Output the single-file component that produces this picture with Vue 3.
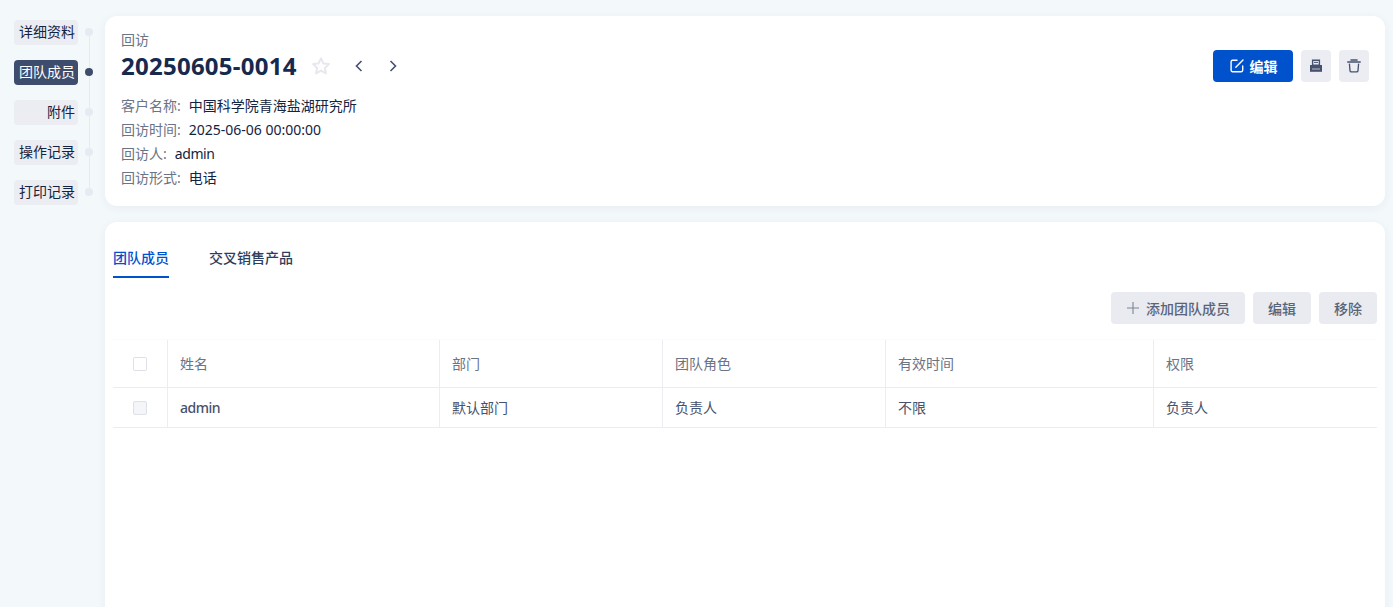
<script setup>
const navItems = [
  { label: '详细资料' },
  { label: '团队成员', active: true },
  { label: '附件' },
  { label: '操作记录' },
  { label: '打印记录' }
]
const infos = [
  { k: '客户名称:', v: '中国科学院青海盐湖研究所' },
  { k: '回访时间:', v: '2025-06-06 00:00:00' },
  { k: '回访人:', v: 'admin', tight: true },
  { k: '回访形式:', v: '电话' }
]
const headers = ['姓名', '部门', '团队角色', '有效时间', '权限']
const row = ['admin', '默认部门', '负责人', '不限', '负责人']
</script>

<template>
  <div class="page">
    <nav class="nav">
      <div class="line"></div>
      <div v-for="n in navItems" :key="n.label" class="nav-item" :class="{ active: n.active }">
        <span class="nav-label">{{ n.label }}</span>
        <i class="dot"></i>
      </div>
    </nav>
    <main class="main">
      <section class="card head">
        <div class="head-left">
          <div class="kind">回访</div>
          <div class="title-row">
            <h1 class="title">20250605-0014</h1>
            <svg class="star" viewBox="0 0 20 20" width="20" height="20"><path d="M10 2.4l2.4 5 5.5.7-4 3.8 1 5.4-4.9-2.7-4.9 2.7 1-5.4-4-3.8 5.5-.7z" fill="none" stroke="#e6e8ee" stroke-width="2" stroke-linejoin="round"/></svg>
            <svg class="chev" viewBox="0 0 12 14" width="12" height="14"><path d="M8.5 2L3.5 7l5 5" fill="none" stroke="#45516e" stroke-width="1.6"/></svg>
            <svg class="chev" viewBox="0 0 12 14" width="12" height="14"><path d="M3.5 2l5 5-5 5" fill="none" stroke="#45516e" stroke-width="1.6"/></svg>
          </div>
          <div class="info">
            <div v-for="i in infos" :key="i.k" class="info-row">
              <span class="k">{{ i.k }}</span><span class="v" :class="{ tight: i.tight }">{{ i.v }}</span>
            </div>
          </div>
        </div>
        <div class="actions">
          <button class="btn primary">
            <svg viewBox="0 0 16 16" width="16" height="16"><path d="M8 2.2H3.6A1.5 1.5 0 0 0 2.1 3.7v8.6a1.5 1.5 0 0 0 1.5 1.5h8.6a1.5 1.5 0 0 0 1.5-1.5V8M6.8 9.3l7.2-7.2" fill="none" stroke="#fff" stroke-width="1.4" stroke-linecap="round"/></svg>
            <span>编辑</span>
          </button>
          <button class="btn icon">
            <svg viewBox="0 0 14 14" width="14" height="14"><path d="M3.6 1.2h6.8v5H3.6z" fill="none" stroke="#45516e" stroke-width="1.4"/><path d="M5 3.4h4" stroke="#45516e" stroke-width="1"/><path d="M1 6h12v6.8H1z" fill="#45516e"/><path d="M3 10h8" stroke="#ebedf2" stroke-width=".7"/></svg>
          </button>
          <button class="btn icon">
            <svg viewBox="0 0 14 14" width="14" height="14"><path d="M.8 3h12.4M4 1h6" fill="none" stroke="#45516e" stroke-width="1.5" stroke-linecap="round"/><path d="M2.4 4.6l.6 7a1.4 1.4 0 0 0 1.4 1.3h5.2a1.4 1.4 0 0 0 1.4-1.3l.6-7" fill="none" stroke="#45516e" stroke-width="1.3"/></svg>
          </button>
        </div>
      </section>

      <section class="card body">
        <div class="tabs">
          <div class="tab active">团队成员</div>
          <div class="tab">交叉销售产品</div>
        </div>
        <div class="toolbar">
          <button class="btn grey add">
            <svg viewBox="0 0 12 12" width="12" height="12"><path d="M6 0v12M0 6h12" stroke="#7d8595" stroke-width="1.1"/></svg>
            <span>添加团队成员</span>
          </button>
          <button class="btn grey">编辑</button>
          <button class="btn grey">移除</button>
        </div>
        <div class="table">
          <div class="tr th">
            <div class="td c0"><i class="check"></i></div>
            <div v-for="(h, i) in headers" :key="h" class="td" :class="'c' + (i + 1)">{{ h }}</div>
          </div>
          <div class="tr rowb">
            <div class="td c0"><i class="check dis"></i></div>
            <div v-for="(c, i) in row" :key="i" class="td" :class="'c' + (i + 1)">{{ c }}</div>
          </div>
        </div>
      </section>
    </main>
  </div>
</template>

<style>
html, body { margin: 0; background: #f3f8fb; overflow: hidden; }
</style>

<style scoped>
.page {
  display: flex;
  height: 607px;
  overflow: hidden;
  background: #f3f8fb;
  font-family: "Noto Sans", "Noto Sans CJK SC", sans-serif;
  font-size: 14px;
  color: #1a2b4b;
}
.nav {
  position: relative;
  width: 105px;
  flex: none;
  padding: 20px 0 0 14px;
  box-sizing: border-box;
}
.line {
  position: absolute;
  left: 89px;
  top: 32px;
  width: 1px;
  height: 160px;
  background: #e6eaf1;
}
.nav-item {
  display: flex;
  align-items: center;
  height: 25px;
  margin-bottom: 15px;
}
.nav-label {
  width: 64px;
  height: 25px;
  line-height: 23px;
  box-sizing: border-box;
  padding-right: 3px;
  text-align: right;
  background: #ebedf2;
  border-radius: 4px;
  color: #14233f;
  white-space: nowrap;
}
.active .nav-label { background: #3e4d6d; color: #fff; }
.dot {
  width: 8px;
  height: 8px;
  margin-left: 7px;
  margin-bottom: 1px;
  border-radius: 50%;
  background: #e6eaf2;
  position: relative;
}
.active .dot { background: #3e4d6d; }
.main {
  flex: none;
  width: 1280px;
  height: 680px;
  padding-top: 16px;
  display: flex;
  flex-direction: column;
  gap: 16px;
}
.card {
  background: #fff;
  border-radius: 12px;
  box-shadow: 0 2px 10px rgba(30, 50, 90, 0.06);
}
.head {
  height: 190px;
  flex: none;
  padding: 14px 16px 0;
  box-sizing: border-box;
  display: flex;
  justify-content: space-between;
  align-items: flex-start;
}
.kind { color: #6b7386; font-size: 14px; line-height: 19px; }
.title-row { display: flex; align-items: center; height: 32px; margin-top: 1px; }
.title {
  margin: 0;
  font-size: 24px;
  line-height: 32px;
  font-weight: 700;
  letter-spacing: 0.25px;
  color: #172a4d;
}
.star { margin-left: 14px; }
.chev { margin-left: 22px; }
.info { margin-top: 12px; }
.info-row { height: 24px; line-height: 24px; font-size: 14px; white-space: nowrap; }
.k { color: #6b7386; margin-right: 8px; }
.v { color: #14233f; }
.tight { letter-spacing: -0.4px; }
.actions { display: flex; gap: 8px; margin-top: 20px; }
.btn {
  border: 0;
  border-radius: 4px;
  font-family: inherit;
  font-size: 14px;
  height: 32px;
  display: inline-flex;
  align-items: center;
  justify-content: center;
  padding: 0;
}
.primary {
  width: 80px;
  background: #0052cc;
  color: #fff;
  font-weight: 700;
  gap: 5px;
  padding-bottom: 1px;
}
.icon { width: 30px; background: #ebedf2; }
.body {
  flex: 1;
  padding: 0 8px;
  min-height: 0;
}
.tabs { display: flex; gap: 40px; padding-top: 24px; height: 32px; }
.tab {
  height: 32px;
  line-height: 24px;
  font-size: 14px;
  font-weight: 500;
  color: #2c3e5d;
  box-sizing: border-box;
}
.tab.active { color: #0052cc; border-bottom: 2px solid #0052cc; }
.toolbar {
  display: flex;
  justify-content: flex-end;
  gap: 8px;
  margin-top: 14px;
}
.grey {
  background: #e9ebf0;
  color: #5a6479;
  font-weight: 500;
  padding: 0 15px 1px;
  gap: 7px;
}
.add { padding-left: 16px; }
.table { margin-top: 15px; }
.tr { display: flex; border-bottom: 1px solid #ebedf2; box-sizing: border-box; }
.th { height: 49px; color: #6b7386; border-top: 1px solid #f9fafb; }
.rowb { height: 40px; color: #45516e; }
.td {
  display: flex;
  align-items: center;
  padding-left: 12px;
  padding-bottom: 2px;
  box-sizing: border-box;
  border-left: 1px solid #ebedf2;
}
.c0 { width: 54px; padding: 0; justify-content: center; border-left: 0; }
.c1 { width: 272px; }
.c2 { width: 223px; }
.c3 { width: 223px; }
.c4 { width: 268px; }
.c5 { width: 224px; }
.rowb .c1 { font-weight: 500; letter-spacing: -0.5px; padding-bottom: 0; }
.check {
  border: 1px solid #dfe1e8;
  border-radius: 2px;
  width: 12px;
  height: 12px;
}
.check.dis { background: #f4f5f9; }
</style>
